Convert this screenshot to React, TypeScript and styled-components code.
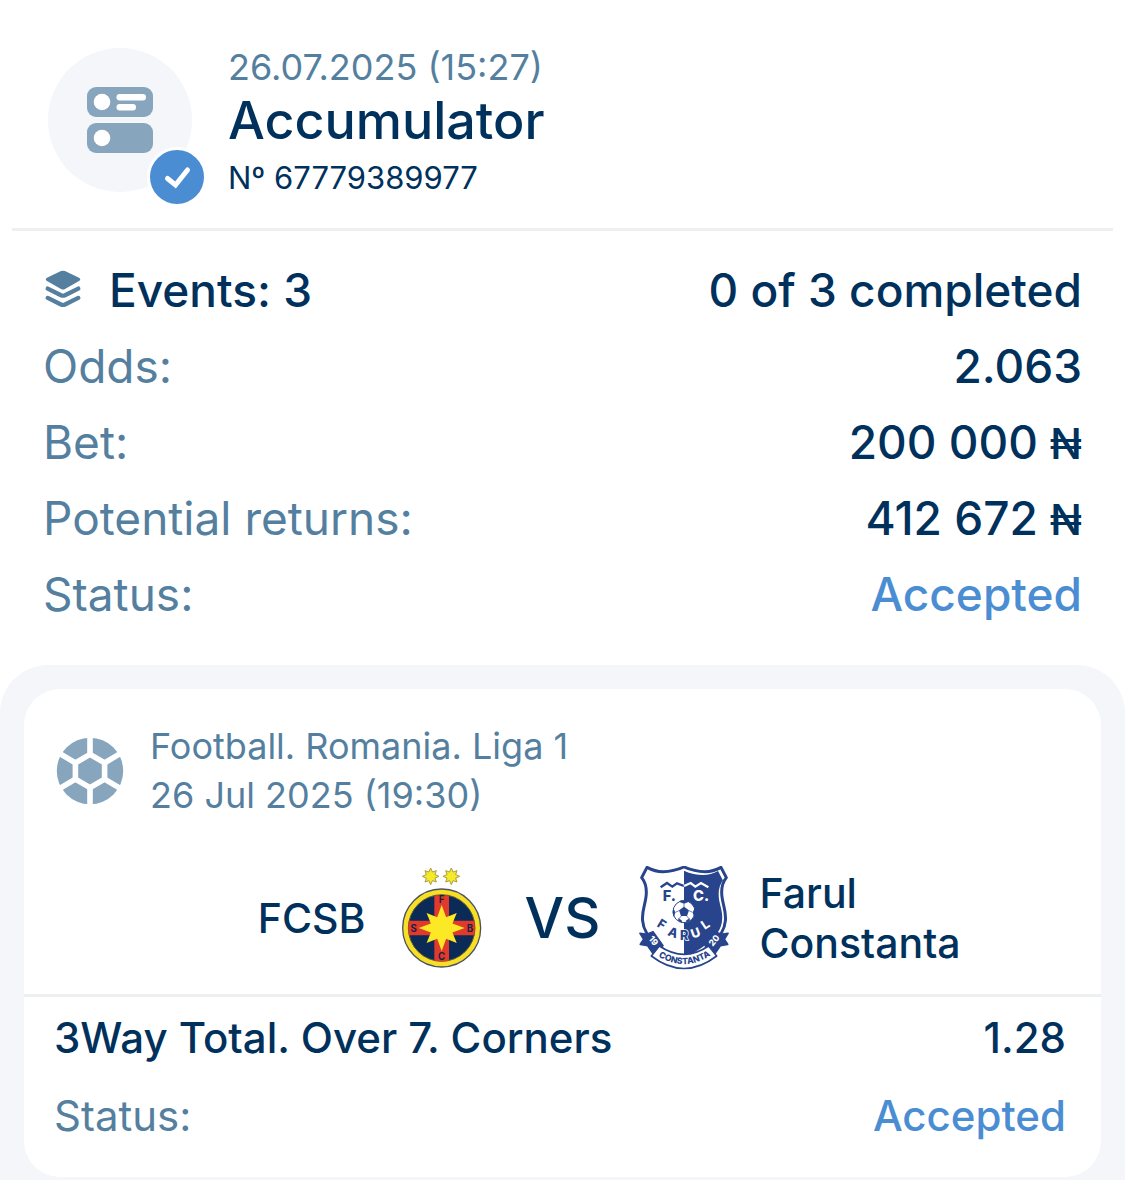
import React from "react";
import styled, { createGlobalStyle } from "styled-components";

const color = {
  navy: "#00315c",
  steel: "#557f9f",
  icon: "#87a5bd",
  blue: "#4a8dd3",
  panel: "#f4f6fa",
  line: "#eeeff1",
};

const GlobalStyle = createGlobalStyle`
  *, *::before, *::after { box-sizing: border-box; }
  body {
    margin: 0;
    background: #fff;
    color: ${color.navy};
    font-family: Inter, "Noto Sans", sans-serif;
  }
  h1, h2, p, dl, dt, dd { margin: 0; font-weight: inherit; }
`;

const Page = styled.main`
  display: flex;
  flex-direction: column;
  min-height: 100vh;
`;

const Header = styled.header`
  display: flex;
  gap: 36px;
  margin: 0 12px;
  padding: 44px 36px 24px;
  border-bottom: 3px solid ${color.line};
`;

const Avatar = styled.div`
  position: relative;
  display: grid;
  place-items: center;
  flex: none;
  width: 144px;
  height: 144px;
  margin-top: 4px;
  border-radius: 50%;
  background: ${color.panel};
`;

const Badge = styled.span`
  position: absolute;
  right: -15px;
  bottom: -15px;
  display: grid;
  place-items: center;
  width: 60px;
  height: 60px;
  border: 3px solid #fff;
  border-radius: 50%;
  background: ${color.blue};
`;

const Title = styled.h1`
  font-size: 52px;
  line-height: 62px;
  font-weight: 500;
`;

const Muted = styled.p<{ $line: number }>`
  color: ${color.steel};
  font-size: 36px;
  line-height: ${(p) => p.$line}px;
`;

const Serial = styled.p`
  font-size: 31px;
  line-height: 52px;
`;

const Summary = styled.dl`
  padding: 21px 43px 33px;
`;

const Row = styled.div<{ $height: number; $size: number }>`
  display: flex;
  align-items: center;
  justify-content: space-between;
  gap: 24px;
  min-height: ${(p) => p.$height}px;
  font-size: ${(p) => p.$size}px;
`;

const Label = styled.dt<{ $strong?: boolean }>`
  display: flex;
  align-items: center;
  gap: 26px;
  color: ${(p) => (p.$strong ? color.navy : color.steel)};
  font-weight: ${(p) => (p.$strong ? 500 : 400)};
`;

const Value = styled.dd<{ $accent?: boolean }>`
  color: ${(p) => (p.$accent ? color.blue : color.navy)};
  font-weight: 500;
  text-align: right;
`;

const Currency = styled.span`
  margin-left: 12px;
  font-size: 42px;
`;

const Panel = styled.section`
  flex: 1;
  padding: 24px 24px 0;
  border-radius: 48px 48px 0 0;
  background: ${color.panel};
`;

const Card = styled.article`
  border-radius: 36px;
  background: #fff;
`;

const CardHeader = styled.header`
  display: flex;
  align-items: center;
  gap: 26px;
  padding: 33px 32px 0;
`;

const Match = styled.div`
  display: grid;
  grid-template-columns: 1fr 104px 138px 104px 1fr;
  align-items: center;
  padding: 46px 32px 24px;
  border-bottom: 3px solid ${color.line};
  line-height: 50px;
  font-weight: 500;
`;

const Team = styled.h2<{ $home?: boolean }>`
  padding: 0 24px;
  font-size: 41px;
  font-weight: 500;
  text-align: ${(p) => (p.$home ? "right" : "left")};
`;

const Versus = styled.p`
  font-size: 56px;
  text-align: center;
`;

const Bets = styled.dl`
  padding: 1px 35px 23px 30px;
`;

function SlipIcon() {
  return (
    <svg width="66" height="66" viewBox="0 0 66 66" aria-hidden="true">
      <rect width="66" height="30" rx="9" fill={color.icon} />
      <rect y="36" width="66" height="30" rx="9" fill={color.icon} />
      <g fill="#fff">
        <circle cx="15" cy="15" r="8.3" />
        <circle cx="15" cy="51" r="8.3" />
        <rect x="29.5" y="7" width="29.5" height="6.4" rx="3.2" />
        <rect x="29.5" y="17" width="19.5" height="6.4" rx="3.2" />
      </g>
    </svg>
  );
}

function CheckIcon() {
  return (
    <svg width="54" height="54" viewBox="0 0 54 54" aria-hidden="true">
      <path d="M17.5 28.5 25.5 35 37.5 20" fill="none" stroke="#fff" strokeWidth="5" strokeLinecap="round" />
    </svg>
  );
}

function LayersIcon() {
  return (
    <svg width="40" height="40" viewBox="0 0 40 40" aria-hidden="true">
      <path d="M18 1.100q2-.8 4 0l14 6.600q2.500 1.700 0 3.400L22 19.100q-2 1-4 0L4 11.100q-2.500-1.700 0-3.400z" fill={color.steel} />
      <g fill="none" stroke={color.steel} strokeWidth="4.300" strokeLinecap="round">
        <path d="M4.700 18.600 18 25.200q2 .9 4 0L35.300 18.600" />
        <path d="M4.700 27.900 18 34.500q2 .9 4 0L35.300 27.900" />
      </g>
    </svg>
  );
}

function BallIcon() {
  return (
    <svg width="68" height="68" viewBox="-34 -34 68 68" aria-hidden="true">
      <circle r="33.200" fill={color.icon} />
      <g fill="none" stroke="#fff" strokeWidth="5.600">
        <path d="M0-16.600 14.600-8.200V8.200L0 16.600-14.600 8.200V-8.200z" />
        <path d="M0-16V-35M0 16V35M14.600-8.200 31-17.800M14.600 8.200 31 17.800M-14.600-8.200-31-17.800M-14.600 8.200-31 17.800" />
      </g>
    </svg>
  );
}

function star(cx: number, cy: number, long: number, short: number, inner: number) {
  return Array.from({ length: 16 }, (_, i) => {
    const r = i % 2 ? inner : i % 4 ? short : long;
    const a = (i * Math.PI) / 8;
    return `${(cx + r * Math.sin(a)).toFixed(1)},${(cy - r * Math.cos(a)).toFixed(1)}`;
  }).join(" ");
}

function FcsbCrest() {
  return (
    <svg width="104" height="104" viewBox="-1 33 312 312" role="img" aria-label="FCSB crest">
      <g fill="#f5e929" stroke="#a99d45" strokeWidth="3">
        <polygon points={star(121, 64, 25, 24, 14)} />
        <polygon points={star(183, 64, 25, 24, 14)} />
      </g>
      <circle cx="154" cy="219" r="117" fill="#f6df25" stroke="#4c5260" strokeWidth="4" />
      <circle cx="154" cy="219" r="100" fill="#0c2a56" stroke="#635d37" strokeWidth="3" />
      <path d="M132 122q22-4 44 0v75h76q4 22 0 44h-76v76q-22 4-44 0v-76H56q-4-22 0-44h76z" fill="#e03a2d" />
      <polygon points={star(154, 219, 69, 64, 35)} fill="#fbe925" />
      <g fill="#1c2140" fontFamily="Inter, sans-serif" fontSize="29" fontWeight="700" textAnchor="middle">
        <text x="154" y="145">F</text>
        <text x="70" y="230">S</text>
        <text x="239" y="230">B</text>
        <text x="154" y="316">C</text>
      </g>
    </svg>
  );
}

const shield =
  "M64 37Q88 50 112 50Q144 50 175 36Q206 50 238 50Q262 50 286 37L302 68Q288 85 288 112C288 145 303 165 299 198C295 250 240 285 175 322C110 285 55 250 51 198C47 165 62 145 62 112Q62 85 48 68Z";

function FarulCrest() {
  return (
    <svg width="104" height="104" viewBox="19 33 312 312" role="img" aria-label="Farul Constanta crest">
      <defs>
        <clipPath id="farul-right">
          <rect x="175" y="30" width="160" height="300" />
        </clipPath>
        <path id="farul-city" d="M89 298Q175 358 264 295" />
      </defs>
      <path d={shield} fill="#fff" stroke="#27448c" strokeWidth="9" strokeLinejoin="round" />
      <g clipPath="url(#farul-right)">
        <path d={shield} fill="#27448c" transform="translate(14 14) scale(.92)" />
      </g>
      <path d="M105 97 124 84 140 95 154 85 175 93" fill="none" stroke="#27448c" strokeWidth="7" />
      <path d="M175 93 195 84 209 95 226 84 248 97" fill="none" stroke="#fff" strokeWidth="7" />
      <g fontFamily="Inter, sans-serif" fontWeight="800">
        <text x="111" y="137" fontSize="44" fill="#27448c">F.</text>
        <text x="202" y="137" fontSize="44" fill="#fff">C.</text>
        <circle cx="175" cy="170" r="33" fill="#fff" stroke="#27448c" strokeWidth="3" />
        <g fill="#27448c">
          <path d="M175 155 190 166 184 183H166L160 166z" />
          <path d="M160 140 175 146 190 140 184 136H166zM143 160 149 172 145 187 141 174zM207 160 201 172 205 187 209 174zM158 190 168 196 169 203 158 198zM192 190 182 196 181 203 192 198z" />
          <path d="M175 146V156M149 172 160 167M201 172 190 167M167 183 158 193M183 183 192 193" stroke="#27448c" strokeWidth="2" />
        </g>
        <text
          x="92 124 163 201 237"
          y="213 240 255 251 225"
          rotate="32 20 0 -20 -34"
          fontSize="38"
          fill="#27448c"
          stroke="#fff"
          strokeWidth="4"
          paintOrder="stroke"
        >
          FAR<tspan fill="#fff" stroke="none">UL</tspan>
        </text>
        <g stroke="#27448c" strokeWidth="5" strokeLinejoin="round">
          <path d="M43 235 64 238 82 230 112 272 98 284 88 304 66 272 44 268 54 253z" fill="#27448c" />
          <path d="M307 235 286 238 268 230 238 272 252 284 262 304 284 272 306 268 296 253z" fill="#27448c" />
          <path d="M101 273Q175 323 249 273L273 303Q175 378 77 303z" fill="#fff" />
        </g>
        <text x="69" y="267" fontSize="26" fill="#fff" transform="rotate(50 84 258)">19</text>
        <text x="249" y="267" fontSize="26" fill="#fff" transform="rotate(-50 264 258)">20</text>
        <text fontSize="26" fill="#27448c">
          <textPath href="#farul-city" startOffset="50%" textAnchor="middle">CONSTANTA</textPath>
        </text>
      </g>
    </svg>
  );
}

export default function App() {
  return (
    <>
      <GlobalStyle />
      <Page>
        <Header>
          <Avatar>
            <SlipIcon />
            <Badge>
              <CheckIcon />
            </Badge>
          </Avatar>
          <div>
            <Muted $line={46}>26.07.2025 (15:27)</Muted>
            <Title>Accumulator</Title>
            <Serial>Nº 67779389977</Serial>
          </div>
        </Header>

        <Summary>
          <Row $height={76} $size={46}>
            <Label $strong>
              <LayersIcon />
              Events: 3
            </Label>
            <Value>0 of 3 completed</Value>
          </Row>
          <Row $height={76} $size={46}>
            <Label>Odds:</Label>
            <Value>2.063</Value>
          </Row>
          <Row $height={76} $size={46}>
            <Label>Bet:</Label>
            <Value>
              200 000<Currency>₦</Currency>
            </Value>
          </Row>
          <Row $height={76} $size={46}>
            <Label>Potential returns:</Label>
            <Value>
              412 672<Currency>₦</Currency>
            </Value>
          </Row>
          <Row $height={76} $size={46}>
            <Label>Status:</Label>
            <Value $accent>Accepted</Value>
          </Row>
        </Summary>

        <Panel>
          <Card>
            <CardHeader>
              <BallIcon />
              <div>
                <Muted $line={49}>Football. Romania. Liga 1</Muted>
                <Muted $line={49}>26 Jul 2025 (19:30)</Muted>
              </div>
            </CardHeader>
            <Match>
              <Team $home>FCSB</Team>
              <FcsbCrest />
              <Versus>VS</Versus>
              <FarulCrest />
              <Team>Farul Constanta</Team>
            </Match>
            <Bets>
              <Row $height={78} $size={42}>
                <Label $strong>3Way Total. Over 7. Corners</Label>
                <Value>1.28</Value>
              </Row>
              <Row $height={78} $size={42}>
                <Label>Status:</Label>
                <Value $accent>Accepted</Value>
              </Row>
            </Bets>
          </Card>
        </Panel>
      </Page>
    </>
  );
}
